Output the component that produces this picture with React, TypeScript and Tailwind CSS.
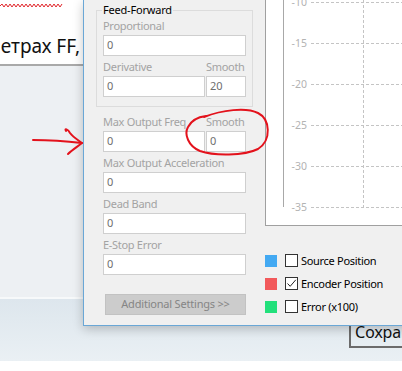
import type { ReactNode } from 'react'

// Segoe-ish UI text; Noto Sans is the closest installed face.
const UI_FONT = "font-['Noto_Sans',sans-serif]"

type FieldProps = {
  label: string
  value: string
  first?: boolean
  smooth?: string
}

function TextBox({ value, className }: { value: string; className?: string }) {
  return (
    <div
      className={`flex h-[21px] items-center border border-[#cfcfcf] bg-white pl-[3px] text-[11px] text-[#6e6e6e] ${className ?? ''}`}
    >
      {value}
    </div>
  )
}

function Field({ label, value, first, smooth }: FieldProps) {
  return (
    <div className={first ? '' : 'mt-[4px]'}>
      <div className="mb-[2px] flex h-[14px] items-center justify-between text-[11px] leading-[14px] tracking-[-0.3px] whitespace-nowrap text-[#a3a3a3]">
        <span>{label}</span>
        {smooth !== undefined && <span className="w-[40px]">Smooth</span>}
      </div>
      {smooth === undefined ? (
        <TextBox value={value} />
      ) : (
        <div className="flex gap-[1px]">
          <TextBox value={value} className="w-[102px]" />
          <TextBox value={smooth} className="w-[40px]" />
        </div>
      )}
    </div>
  )
}

function LegendRow({ color, label, checked }: { color: string; label: string; checked?: boolean }) {
  return (
    <div className="flex h-[23px] items-center">
      <span className="h-[12px] w-[12px]" style={{ backgroundColor: color }} />
      <span className="ml-[8px] flex h-[13px] w-[13px] items-center justify-center border border-[#333] bg-white">
        {checked && (
          <svg width="11" height="11" viewBox="0 0 11 11">
            <path d="M1.5 5.5 L4.2 8.3 L9.8 1.8" fill="none" stroke="#222" strokeWidth="1" />
          </svg>
        )}
      </span>
      <span className="ml-[3px] text-[11px] leading-[14px] tracking-[-0.3px] text-black">{label}</span>
    </div>
  )
}

function Chart() {
  const ticks = [-10, -15, -20, -25, -30, -35]
  return (
    <svg width="160" height="225" className="block">
      <line x1="17.5" y1="0" x2="17.5" y2="207" stroke="#a8a8a8" />
      <line x1="97.5" y1="0" x2="97.5" y2="207" stroke="#c4c4c4" strokeDasharray="3 2" />
      {ticks.map((t, i) => {
        const y = 2.5 + i * 41
        return (
          <g key={t}>
            <line x1="45" y1={y} x2="160" y2={y} stroke="#c4c4c4" strokeDasharray="3 2" />
            <text
              x="41"
              y={y + 1}
              textAnchor="end"
              dominantBaseline="middle"
              fontSize="10.5"
              fill="#b3b3b3"
              fontFamily="Noto Sans, sans-serif"
            >
              {t}
            </text>
          </g>
        )
      })}
    </svg>
  )
}

function GroupBox({ title, children }: { title: string; children: ReactNode }) {
  return (
    <div className="relative mt-[10px] border border-[#dcdcdc] px-[6px] pt-[8px] pb-[9px]">
      <span className="absolute -top-[8px] left-[5px] bg-[#f0f0f0] px-[1px] text-[11px] leading-[14px] tracking-[-0.2px] text-black">
        {title}
      </span>
      {children}
    </div>
  )
}

function DialogWindow() {
  return (
    <div
      className={`absolute top-0 left-[83px] flex h-[326px] w-[340px] border-b border-l border-[#6aa7d6] bg-[#f0f0f0] shadow-[0_3px_10px_rgba(0,0,0,0.22)] ${UI_FONT}`}
    >
      <div className="ml-[12px] flex w-[159px] flex-col">
        <GroupBox title="Feed-Forward">
          <Field first label="Proportional" value="0" />
          <Field label="Derivative" value="0" smooth="20" />
        </GroupBox>
        <div className="mt-[8px] px-[7px]">
          <Field first label="Max Output Freq" value="0" smooth="0" />
          <Field label="Max Output Acceleration" value="0" />
          <Field label="Dead Band" value="0" />
          <Field label="E-Stop Error" value="0" />
        </div>
        <button
          type="button"
          className="mt-[19px] ml-[9px] h-[21px] w-[141px] border border-[#c2c2c2] bg-[#cccccc] text-[11px] tracking-[-0.2px] text-[#858585]"
        >
          Additional Settings &gt;&gt;
        </button>
      </div>
      <div className="ml-[12px] flex flex-col">
        <div className="h-[226px] w-[160px] border-r border-b border-l border-[#a0a0a0] bg-white">
          <Chart />
        </div>
        <div className="mt-[23px]">
          <LegendRow color="#43a9f2" label="Source Position" />
          <LegendRow color="#f2595b" label="Encoder Position" checked />
          <LegendRow color="#22e07b" label="Error (x100)" />
        </div>
      </div>
    </div>
  )
}

function Page() {
  return (
    <div className="flex h-full flex-col font-['Noto_Sans',sans-serif]">
      <div className="relative h-[64px] overflow-hidden">
        <div className="-mt-[16px] w-[83px] overflow-hidden text-[15px] leading-[16px] whitespace-nowrap text-black">
          <span className="-ml-[20px]">позиционирования</span>
        </div>
        <svg width="64" height="6" className="absolute top-[3px] left-0">
          <path
            d="M0 3 L2 1 L4 4 L6 1 L8 4 L10 1 L12 4 L14 1 L16 4 L18 1 L20 4 L22 1 L24 4 L26 1 L28 4 L30 1 L32 4 L34 1 L36 4 L38 1 L40 4 L42 1 L44 4 L46 1 L48 4 L50 1 L52 4 L54 1 L56 4 L58 1 L60 4 L62 1"
            fill="none"
            stroke="#e0262b"
            strokeWidth="1"
          />
        </svg>
        <div className="mt-[34px] flex w-[83px] justify-end overflow-hidden pr-[3px] text-[19px] leading-[24px] whitespace-nowrap text-[#111]">
          <span>параметрах FF,</span>
        </div>
      </div>
      <div className="h-[2px] bg-[#a9a9a9]" />
      <div className="h-[231px] bg-[#edf0f3]" />
      <div className="h-[2px] bg-[#f7f9fa]" />
      <div className="h-[62px] bg-gradient-to-b from-[#dde6ed] to-[#eaf0f4]">
        <div className="mt-[16px] ml-[349px] flex h-[33px] items-end overflow-hidden border-b-2 border-l-2 border-[#6b6b6b] pb-[4px] pl-[4px]">
          <span className="text-[16px] leading-[20px] whitespace-nowrap text-[#111]">Сохранить</span>
        </div>
      </div>
      <div className="flex-1 bg-white" />
    </div>
  )
}

function Annotations() {
  return (
    <svg width="402" height="371" className="pointer-events-none absolute inset-0">
      <g fill="none" stroke="#e3121c" strokeWidth="2" strokeLinecap="round" strokeLinejoin="round">
        <path d="M33 140 C 48 140, 65 141, 82 143" />
        <path d="M66 131 C 64 128, 68 129, 70 133 C 73 137, 78 140, 82 143 C 77 147, 72 150, 68 154" />
        <path d="M204 117 C 222 110, 246 107, 258 113 C 270 119, 272 140, 258 149 C 244 156, 214 156, 200 151 C 188 146, 184 134, 188 127 C 191 121, 198 117, 206 116" />
      </g>
    </svg>
  )
}

export default function App() {
  return (
    <div className="relative h-[371px] w-[402px] overflow-hidden bg-white">
      <Page />
      <DialogWindow />
      <Annotations />
    </div>
  )
}
